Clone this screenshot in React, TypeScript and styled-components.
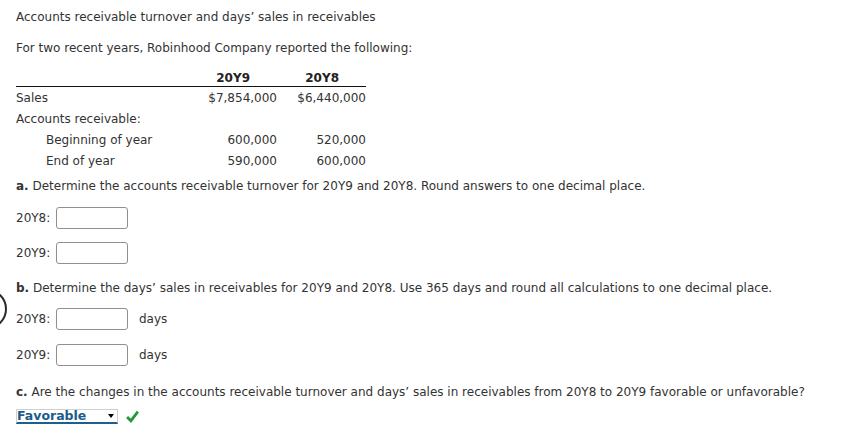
import React from "react";
import styled, { createGlobalStyle } from "styled-components";

const Global = createGlobalStyle`
  html, body { margin: 0; padding: 0; background: #fff; }
  body { font-family: "DejaVu Sans", Verdana, sans-serif; font-size: 12px; color: #333; }
`;

const Page = styled.div`
  position: relative;
  width: 865px;
  height: 438px;
  overflow: hidden;
  padding: 9px 0 0 16px;
  box-sizing: border-box;
`;

const Para = styled.p<{ $top?: number }>`
  margin: ${(p) => p.$top ?? 0}px 0 0 0;
  line-height: 16px;
  white-space: nowrap;
`;

const Table = styled.div`
  margin-top: 14px;
  display: grid;
  grid-template-columns: 192px 69px 89px;
  width: 350px;
`;

const HeadCell = styled.div`
  font-weight: bold;
  text-align: right;
  padding-right: 27px;
  line-height: 16px;
  border-bottom: 1.5px solid #111;
  color: #222;
`;

const HeadBlank = styled.div`
  border-bottom: 1.5px solid #111;
`;

const Cell = styled.div<{ $indent?: boolean; $num?: boolean }>`
  line-height: 21px;
  padding-left: ${(p) => (p.$indent ? 30 : 0)}px;
  text-align: ${(p) => (p.$num ? "right" : "left")};
  white-space: nowrap;
`;

const FirstRowGap = styled.div`
  grid-column: 1 / -1;
  height: 1px;
`;

const Bold = styled.b`
  font-weight: bold;
`;

const AnswerRow = styled.div<{ $top: number }>`
  display: flex;
  align-items: center;
  margin-top: ${(p) => p.$top}px;
  height: 22px;
`;

const Label = styled.span`
  width: 40px;
  white-space: nowrap;
`;

const Input = styled.div`
  width: 70px;
  height: 20px;
  border: 1px solid #8f8f8f;
  border-radius: 3px;
  background: #fff;
`;

const Unit = styled.span`
  margin-left: 11px;
`;

const SelectRow = styled.div`
  display: flex;
  align-items: center;
  margin-top: 9px;
  height: 15px;
`;

const Select = styled.div`
  position: relative;
  width: 100px;
  height: 12px;
  border: 1px solid #d0d0d0;
  border-bottom: 2px solid #1f5f8e;
  display: flex;
  align-items: center;
  font-weight: bold;
  color: #1c5c8c;
  font-size: 12.5px;
  line-height: 12px;
  box-sizing: content-box;
`;

const Arrow = styled.span`
  position: absolute;
  right: 3px;
  top: 4px;
  width: 0;
  height: 0;
  border-left: 3px solid transparent;
  border-right: 3px solid transparent;
  border-top: 4px solid #000;
`;

const Check = styled.svg`
  margin-left: 8px;
`;

const EdgeCircle = styled.div`
  position: absolute;
  left: -33px;
  top: 289px;
  width: 36px;
  height: 36px;
  border: 2.5px solid #2a2a2a;
  border-radius: 50%;
`;

export default function App() {
  return (
    <>
      <Global />
      <Page>
        <EdgeCircle />
        <Para>Accounts receivable turnover and days’ sales in receivables</Para>
        <Para $top={15}>For two recent years, Robinhood Company reported the following:</Para>
        <Table>
          <HeadBlank />
          <HeadCell>20Y9</HeadCell>
          <HeadCell>20Y8</HeadCell>
          <FirstRowGap />
          <Cell>Sales</Cell>
          <Cell $num>$7,854,000</Cell>
          <Cell $num>$6,440,000</Cell>
          <Cell>Accounts receivable:</Cell>
          <Cell />
          <Cell />
          <Cell $indent>Beginning of year</Cell>
          <Cell $num>600,000</Cell>
          <Cell $num>520,000</Cell>
          <Cell $indent>End of year</Cell>
          <Cell $num>590,000</Cell>
          <Cell $num>600,000</Cell>
        </Table>
        <Para $top={6}>
          <Bold>a.</Bold> Determine the accounts receivable turnover for 20Y9 and 20Y8. Round answers to one decimal place.
        </Para>
        <AnswerRow $top={13}>
          <Label>20Y8:</Label>
          <Input />
        </AnswerRow>
        <AnswerRow $top={13}>
          <Label>20Y9:</Label>
          <Input />
        </AnswerRow>
        <Para $top={16}>
          <Bold>b.</Bold> Determine the days’ sales in receivables for 20Y9 and 20Y8. Use 365 days and round all calculations to one decimal place.
        </Para>
        <AnswerRow $top={12}>
          <Label>20Y8:</Label>
          <Input />
          <Unit>days</Unit>
        </AnswerRow>
        <AnswerRow $top={14}>
          <Label>20Y9:</Label>
          <Input />
          <Unit>days</Unit>
        </AnswerRow>
        <Para $top={18}>
          <Bold>c.</Bold> Are the changes in the accounts receivable turnover and days’ sales in receivables from 20Y8 to 20Y9 favorable or unfavorable?
        </Para>
        <SelectRow>
          <Select>
            Favorable
            <Arrow />
          </Select>
          <Check width="13" height="13" viewBox="0 0 12 12">
            <path d="M1 6.5 L4.5 10 L11 1.5" fill="none" stroke="#1f9a3a" strokeWidth="2.6" />
          </Check>
        </SelectRow>
      </Page>
    </>
  );
}
